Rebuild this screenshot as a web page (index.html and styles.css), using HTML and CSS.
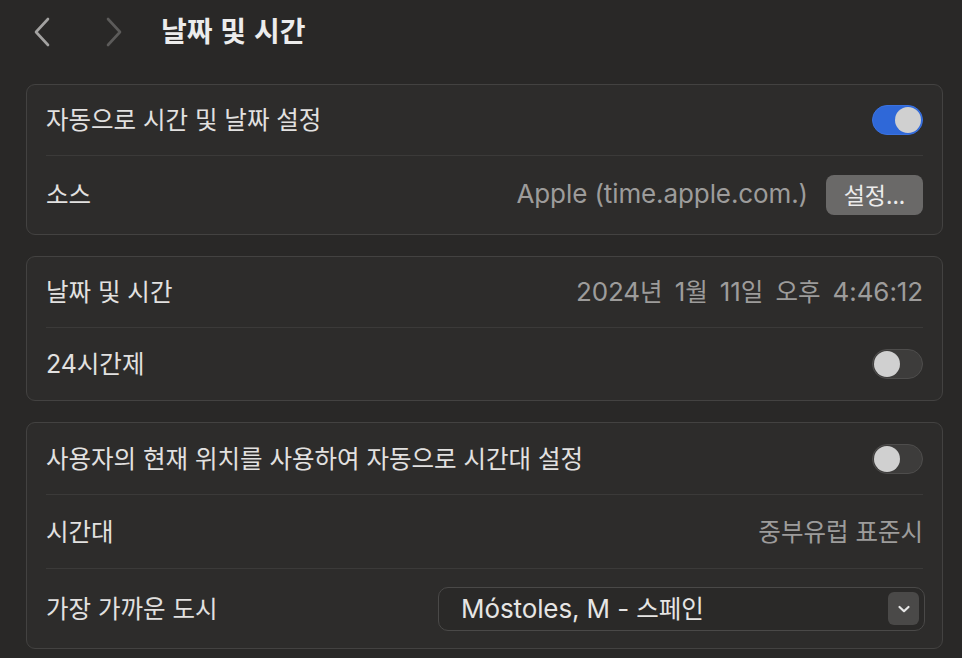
FILE: index.html
```html
<!DOCTYPE html>
<html lang="ko">
<head>
<meta charset="utf-8">
<title>날짜 및 시간</title>
<link rel="stylesheet" href="styles.css">
</head>
<body>
<div class="page">
  <header class="toolbar">
    <span class="nav back">
      <svg width="20" height="30" viewBox="0 0 20 30"><path d="M16 2 L4 15 L16 28" fill="none" stroke="currentColor" stroke-width="2.6" stroke-linecap="round" stroke-linejoin="round"/></svg>
    </span>
    <span class="nav fwd">
      <svg width="20" height="30" viewBox="0 0 20 30"><path d="M4 2 L16 15 L4 28" fill="none" stroke="currentColor" stroke-width="2.6" stroke-linecap="round" stroke-linejoin="round"/></svg>
    </span>
    <h1 class="title">날짜 및 시간</h1>
  </header>

  <section class="panel">
    <div class="row">
      <span class="label">자동으로 시간 및 날짜 설정</span>
      <span class="toggle on"><span class="knob"></span></span>
    </div>
    <div class="row row-btn">
      <span class="label">소스</span>
      <span class="right">
        <span class="value num">Apple (time.apple.com.)</span>
        <span class="button">설정...</span>
      </span>
    </div>
  </section>

  <section class="panel">
    <div class="row">
      <span class="label">날짜 및 시간</span>
      <span class="value num date">2024<span class="ko">년</span> 1<span class="ko">월</span> 11<span class="ko">일</span> <span class="ko">오후</span> 4:46:12</span>
    </div>
    <div class="row row-2">
      <span class="label"><span class="num">24</span>시간제</span>
      <span class="toggle"><span class="knob"></span></span>
    </div>
  </section>

  <section class="panel panel-3">
    <div class="row row-1b">
      <span class="label">사용자의 현재 위치를 사용하여 자동으로 시간대 설정</span>
      <span class="toggle"><span class="knob"></span></span>
    </div>
    <div class="row row-tall">
      <span class="label">시간대</span>
      <span class="value">중부유럽 표준시</span>
    </div>
    <div class="row row-select">
      <span class="label">가장 가까운 도시</span>
      <span class="select">
        <span class="select-text num">Móstoles, M - <span class="ko">스페인</span></span>
        <span class="chev">
          <svg width="14" height="10" viewBox="0 0 14 10"><path d="M2.5 3 L7 7.2 L11.5 3" fill="none" stroke="#e6e6e6" stroke-width="2.2" stroke-linecap="round" stroke-linejoin="round"/></svg>
        </span>
      </span>
    </div>
  </section>
</div>
</body>
</html>
```

FILE: styles.css
```css
html, body {
  margin: 0;
  padding: 0;
  background: #292827;
}
body {
  font-family: "Inter", "Noto Sans CJK KR", sans-serif;
  color: #e2e1e0;
  width: 962px;
  height: 658px;
  overflow: hidden;
}
.page {
  padding: 0 19px 0 26px;
  display: flex;
  flex-direction: column;
  gap: 21px;
}
.toolbar {
  height: 63px;
  display: flex;
  align-items: center;
  margin-bottom: 0;
}
.nav {
  display: flex;
  align-items: center;
  height: 30px;
}
.nav.back {
  color: #a3a2a1;
  margin-left: 6px;
}
.nav.fwd {
  color: #5c5b5a;
  margin-left: 52px;
}
.title {
  margin: 0 0 0 37px;
  font-family: "Noto Sans CJK KR", sans-serif;
  font-size: 28px;
  font-weight: 700;
  color: #ececec;
  line-height: 1;
  padding-bottom: 4px;
}
.panel {
  background: #2d2c2b;
  border: 1px solid #434241;
  border-radius: 9px;
  padding: 0 19px;
}
.row {
  display: flex;
  align-items: center;
  justify-content: space-between;
  min-height: 70px;
  border-top: 1px solid #3b3a39;
}
.row:first-child {
  border-top: none;
}
.row-btn {
  min-height: 78px;
}
.row-2 {
  min-height: 72px;
}
.row-1b {
  min-height: 71px;
}
.row-tall {
  min-height: 73px;
}
.row-select {
  min-height: 79px;
}
.label {
  font-family: "Noto Sans CJK KR", sans-serif;
  font-size: 24.5px;
  color: #e2e1e0;
  padding-bottom: 3px;
}
.label .num {
  font-family: "Inter", sans-serif;
  font-size: 25px;
}
.value {
  font-family: "Noto Sans CJK KR", sans-serif;
  font-size: 24.5px;
  color: #9d9c9b;
  padding-bottom: 3px;
}
.num {
  font-family: "Inter", "Noto Sans CJK KR", sans-serif;
  font-size: 26px;
  letter-spacing: -0.1px;
}
.date {
  word-spacing: 5px;
}
.ko {
  font-family: "Noto Sans CJK KR", sans-serif;
  font-size: 24.5px;
}
.right {
  display: flex;
  align-items: center;
  gap: 18px;
}
.button {
  display: inline-flex;
  align-items: center;
  justify-content: center;
  width: 97px;
  height: 40px;
  box-sizing: border-box;
  background: #6a6968;
  border-radius: 8px;
  color: #ececec;
  font-family: "Noto Sans CJK KR", sans-serif;
  font-size: 23px;
  padding-bottom: 3px;
}
.toggle {
  position: relative;
  width: 51px;
  height: 30px;
  box-sizing: border-box;
  border-radius: 15px;
  background: #3d3c3b;
  border: 1px solid #4e4d4c;
}
.toggle .knob {
  position: absolute;
  top: 1px;
  left: 1px;
  width: 26px;
  height: 26px;
  border-radius: 50%;
  background: #d0d0d0;
}
.toggle.on {
  background: #2f68d8;
  border-color: #3a72e0;
}
.toggle.on .knob {
  left: auto;
  right: 1px;
}
.select {
  display: flex;
  align-items: center;
  justify-content: space-between;
  width: 487px;
  height: 44px;
  margin-right: -2px;
  box-sizing: border-box;
  border: 1px solid #4a4948;
  border-radius: 10px;
  background: #2a2928;
  padding: 0 5px 0 22px;
}
.select-text {
  color: #e6e5e4;
  padding-bottom: 2px;
}
.chev {
  display: flex;
  align-items: center;
  justify-content: center;
  width: 31px;
  height: 33px;
  border-radius: 6px;
  background: #4a4948;
}
```
